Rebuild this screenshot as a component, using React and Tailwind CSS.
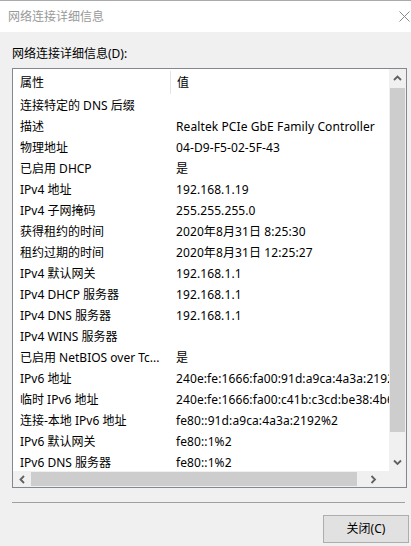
const rows = [
  ["连接特定的 DNS 后缀", ""],
  ["描述", "Realtek PCIe GbE Family Controller"],
  ["物理地址", "04-D9-F5-02-5F-43"],
  ["已启用 DHCP", "是"],
  ["IPv4 地址", "192.168.1.19"],
  ["IPv4 子网掩码", "255.255.255.0"],
  ["获得租约的时间", "2020年8月31日 8:25:30"],
  ["租约过期的时间", "2020年8月31日 12:25:27"],
  ["IPv4 默认网关", "192.168.1.1"],
  ["IPv4 DHCP 服务器", "192.168.1.1"],
  ["IPv4 DNS 服务器", "192.168.1.1"],
  ["IPv4 WINS 服务器", ""],
  ["已启用 NetBIOS over Tc...", "是"],
  ["IPv6 地址", "240e:fe:1666:fa00:91d:a9ca:4a3a:2192%2"],
  ["临时 IPv6 地址", "240e:fe:1666:fa00:c41b:c3cd:be38:4b6f"],
  ["连接-本地 IPv6 地址", "fe80::91d:a9ca:4a3a:2192%2"],
  ["IPv6 默认网关", "fe80::1%2"],
  ["IPv6 DNS 服务器", "fe80::1%2"],
];

const Chevron = ({ dir }) => {
  const d = {
    up: "M1 5 L4.5 1.5 L8 5",
    down: "M1 1.5 L4.5 5 L8 1.5",
    left: "M5 1 L1.5 4.5 L5 8",
    right: "M1.5 1 L5 4.5 L1.5 8",
  }[dir];
  const vert = dir === "up" || dir === "down";
  return (
    <svg width={vert ? 9 : 7} height={vert ? 7 : 9} viewBox={vert ? "0 0 9 7" : "0 0 7 9"}>
      <path d={d} fill="none" stroke="#606060" strokeWidth="1.8" />
    </svg>
  );
};

export default function App() {
  return (
    <div
      className="w-[411px] h-[546px] bg-[#f0f0f0] text-[12px] text-black overflow-hidden"
      style={{ fontFamily: '"Noto Sans", "Noto Sans CJK SC", sans-serif' }}
    >
      {/* Title bar */}
      <div className="h-[32px] bg-white border-t border-[#aaaaaa] flex items-center justify-between pl-[8px] pr-[1px]">
        <span className="text-[#999999] text-[12px]">网络连接详细信息</span>
        <svg width="11" height="11" viewBox="0 0 11 11">
          <path d="M0.5 0.5 L10.5 10.5 M10.5 0.5 L0.5 10.5" stroke="#8a8a8a" strokeWidth="1" />
        </svg>
      </div>

      <div className="px-[12px] pt-[14px]">
        <div className="h-[16px] leading-[16px]">网络连接详细信息(D):</div>

        {/* List box */}
        <div className="mt-[6px] w-[395px] h-[420px] border border-[#828790] bg-white flex flex-col">
          <div className="flex h-[402px]">
            <div className="w-[377px] overflow-hidden">
              <div className="flex h-[25px] items-center pt-[2px]">
                <div className="w-[157px] pl-[7px]">属性</div>
                <div className="w-px h-[23px] bg-[#e5e5e5]" />
                <div className="pl-[6px]">值</div>
              </div>
              {rows.map(([k, v]) => (
                <div key={k} className="flex h-[21px] leading-[23px] whitespace-nowrap">
                  <div className="w-[158px] shrink-0 pl-[7px] overflow-hidden">{k}</div>
                  <div className="pl-[5px] tracking-[0.1px]">{v}</div>
                </div>
              ))}
            </div>
            {/* Vertical scrollbar */}
            <div className="w-[17px] bg-[#f0f0f0] flex flex-col">
              <div className="h-[18px] flex items-center justify-center">
                <Chevron dir="up" />
              </div>
              <div className="mx-[1px] mt-[1px] h-[344px] bg-[#cdcdcd]" />
              <div className="flex-1" />
              <div className="h-[18px] flex items-center justify-center">
                <Chevron dir="down" />
              </div>
            </div>
          </div>
          {/* Horizontal scrollbar */}
          <div className="flex h-[16px]">
            <div className="w-[377px] bg-[#f0f0f0] flex items-center">
              <div className="w-[18px] flex items-center justify-center">
                <Chevron dir="left" />
              </div>
              <div className="w-[326px] h-[14px] bg-[#cdcdcd]" />
              <div className="flex-1 flex items-center justify-center">
                <Chevron dir="right" />
              </div>
            </div>
            <div className="w-[17px] bg-[#f0f0f0]" />
          </div>
        </div>

        <div className="mt-[14px] w-[393px] h-px bg-[#a0a0a0]" />

        <div className="flex justify-end mr-[-10px] mt-[12px]">
          <button className="w-[86px] h-[28px] bg-[#e1e1e1] border border-[#adadad] text-[12px] flex items-center justify-center">
            关闭(C)
          </button>
        </div>
      </div>
    </div>
  );
}
